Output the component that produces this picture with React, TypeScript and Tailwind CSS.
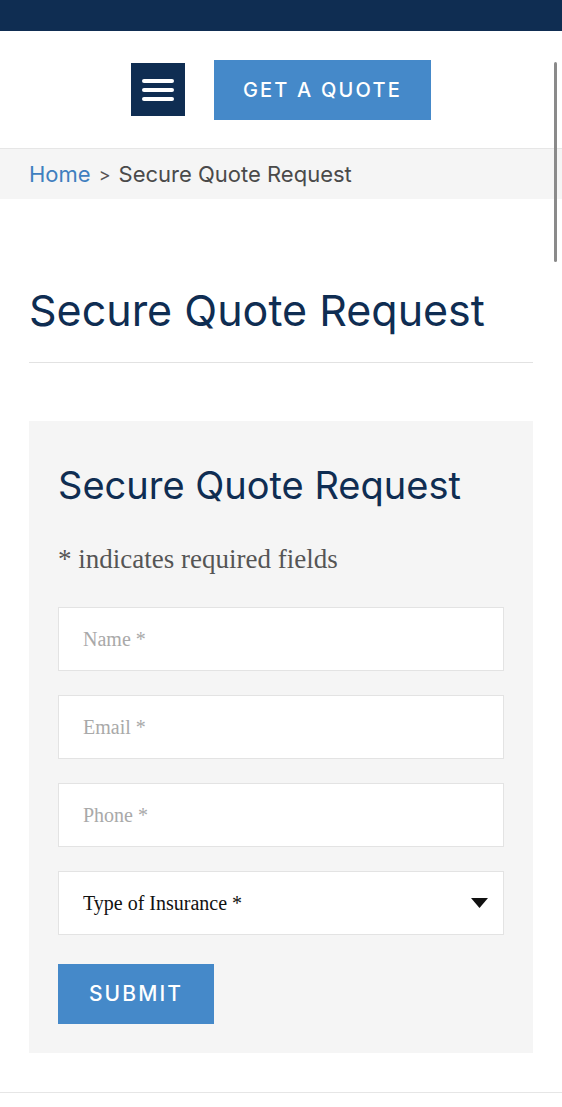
import { useState } from 'react';

const sans = { fontFamily: 'Inter, "Noto Sans", sans-serif' };
const serif = { fontFamily: '"Liberation Serif", "DejaVu Serif", serif' };

function Field({ placeholder }: { placeholder: string }) {
  return (
    <input
      type="text"
      placeholder={placeholder}
      className="h-[64px] w-full border border-[#e3e3e3] bg-white px-[24px] text-[20px] text-[#222] outline-none placeholder:text-[#a9a9a9]"
      style={serif}
    />
  );
}

export default function App() {
  const [kind, setKind] = useState('');

  return (
    <div className="relative min-h-[1107px] w-full overflow-hidden bg-white" style={sans}>
      <div className="h-[31px] bg-[#0f2d52]" />

      <header className="flex h-[118px] items-center justify-center gap-[29px] border-b border-[#e6e6e6] bg-white">
        <button className="flex h-[53px] w-[54px] items-center justify-center bg-[#0f2d52]">
          <svg width="32" height="24" viewBox="0 0 32 24">
            <rect x="0" y="1" width="32" height="4" rx="2" fill="#fff" />
            <rect x="0" y="10" width="32" height="4" rx="2" fill="#fff" />
            <rect x="0" y="19" width="32" height="4" rx="2" fill="#fff" />
          </svg>
        </button>
        <button className="h-[60px] w-[217px] bg-[#4589c9] text-[20px] font-medium tracking-[0.11em] text-white">
          GET A QUOTE
        </button>
      </header>

      <nav className="flex h-[50px] items-center bg-[#f5f5f5] px-[29px] text-[22px]">
        <a className="text-[#3f7fbf]">Home</a>
        <span className="mx-[8px] text-[18px] text-[#555]">&gt;</span>
        <span className="text-[#4a4a4a]">Secure Quote Request</span>
      </nav>

      <main className="px-[29px] pt-[86px]">
        <h1 className="text-[43px] leading-[50px] text-[#0f2d52]">Secure Quote Request</h1>
        <hr className="mt-[27px] border-[#e2e2e2]" />

        <section className="mt-[58px] bg-[#f5f5f5] px-[29px] pb-[29px] pt-[41px]">
          <h2 className="text-[38px] leading-[46px] text-[#0f2d52]">Secure Quote Request</h2>
          <p className="mt-[34px] text-[27px] leading-[34px] text-[#555]" style={serif}>
            * indicates required fields
          </p>

          <form className="mt-[31px] flex flex-col gap-[24px]" onSubmit={(e) => e.preventDefault()}>
            <Field placeholder="Name *" />
            <Field placeholder="Email *" />
            <Field placeholder="Phone *" />
            <div className="relative">
              <select
                value={kind}
                onChange={(e) => setKind(e.target.value)}
                className="h-[64px] w-full appearance-none border border-[#e3e3e3] bg-white px-[24px] text-[20px] text-[#111] outline-none"
                style={serif}
              >
                <option value="">Type of Insurance *</option>
                <option value="auto">Auto</option>
                <option value="home">Home</option>
                <option value="life">Life</option>
                <option value="business">Business</option>
              </select>
              <svg
                className="pointer-events-none absolute right-[16px] top-[27px]"
                width="17"
                height="10"
                viewBox="0 0 17 10"
              >
                <path d="M0 0 H17 L8.5 10 Z" fill="#111" />
              </svg>
            </div>
            <div className="pt-[5px]">
              <button
                type="submit"
                className="h-[60px] w-[156px] bg-[#4589c9] text-[21px] font-medium tracking-[0.1em] text-white"
              >
                SUBMIT
              </button>
            </div>
          </form>
        </section>
      </main>

      <div className="mt-[39px] border-t border-[#e6e6e6]" />

      <div className="absolute right-[5px] top-[62px] h-[200px] w-[3px] rounded-full bg-[#8a8a8a]" />
    </div>
  );
}
